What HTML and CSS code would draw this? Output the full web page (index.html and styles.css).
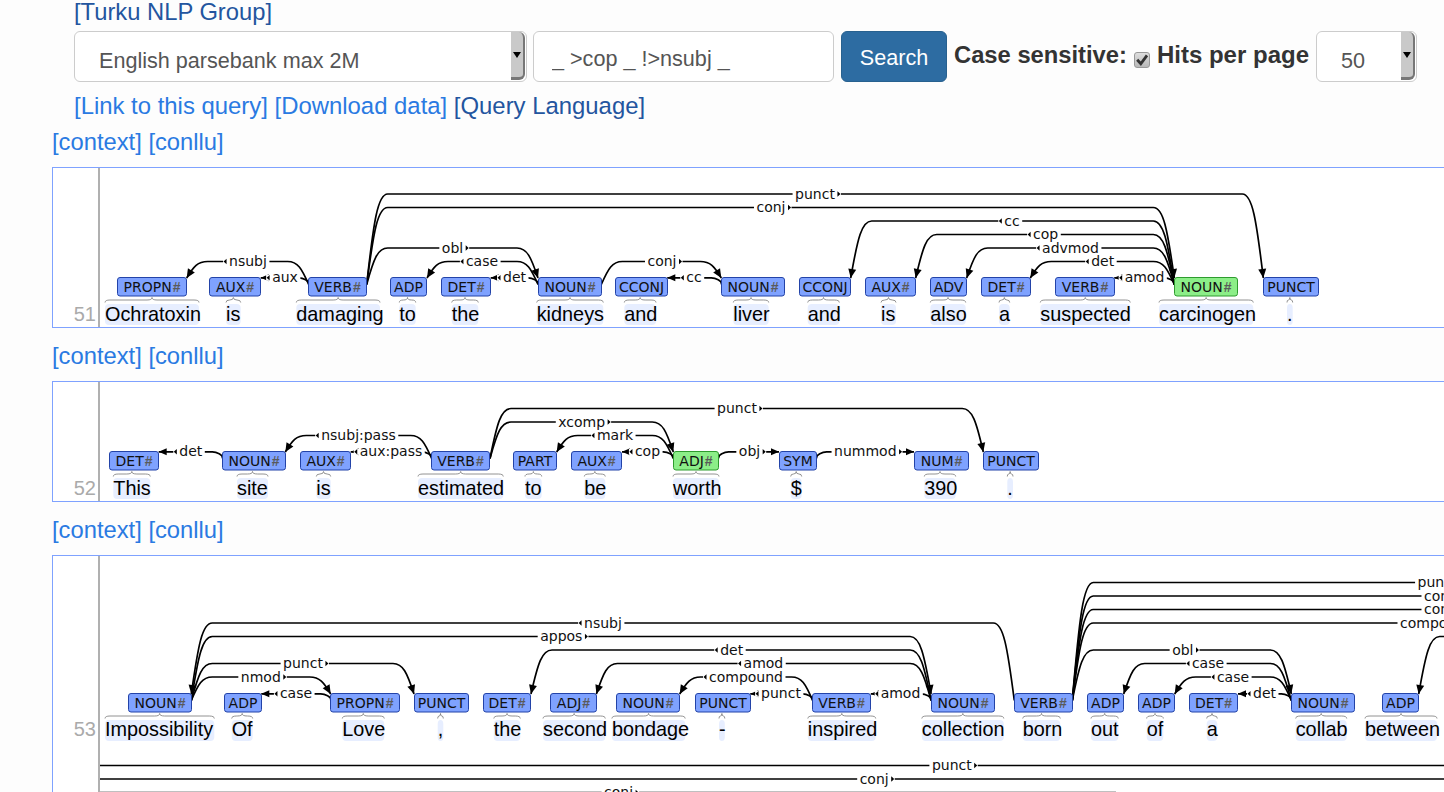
FILE: index.html
```html
<!doctype html>
<html lang="en">
  <head>
    <meta charset="UTF-8" />
    <meta name="viewport" content="width=device-width, initial-scale=1.0" />
    <title>Dependency tree search</title>
    <link rel="stylesheet" href="styles.css">
  </head>
  <body>
    <div class="search">
      <div class="group-link"><a class="dark" href="#">[Turku NLP Group]</a></div>
      <form class="controls">
        <div class="select corpus">
          <span>English parsebank max 2M</span>
          <span class="select-btn"><span class="select-arrow"></span></span>
        </div>
        <input class="query" type="text" value="_ &gt;cop _ !&gt;nsubj _" />
        <button class="search-btn" type="button">Search</button>
        <label class="opt">Case sensitive:</label>
        <span class="checkbox">
          <svg width="14" height="14" viewBox="0 0 14 14"><path d="M2.2 6.8 L5.8 10.8 L12 2.4" fill="none" stroke="#333" stroke-width="2.8" /></svg>
        </span>
        <label class="opt opt-hits">Hits per page</label>
        <div class="select hits">
          <span>50</span>
          <span class="select-btn"><span class="select-arrow"></span></span>
        </div>
      </form>
      <div class="query-links">
        <a href="#">[Link to this query]</a>
        <a href="#">[Download data]</a>
        <a class="dark" href="#">[Query Language]</a>
      </div>
    </div>

    <div class="hit-links"><a href="#">[context]</a> <a href="#">[conllu]</a></div>
    <div class="hit"><svg id="tree51"></svg></div>

    <div class="hit-links"><a href="#">[context]</a> <a href="#">[conllu]</a></div>
    <div class="hit"><svg id="tree52"></svg></div>

    <div class="hit-links"><a href="#">[context]</a> <a href="#">[conllu]</a></div>
    <div class="hit"><svg id="tree53"></svg></div>

    <script src="trees.js"></script>
  </body>
</html>
```

FILE: styles.css
```css
html,
body {
  overflow: hidden;
}

body {
  font-family: "Liberation Sans", Arial, sans-serif;
  background-color: #fdfdfd;
  color: #333;
  margin: 0;
  padding: 0;
  font-size: 23.75px;
  line-height: 34px;
}

a {
  color: #2a7ae2;
  text-decoration: none;
}

a.dark {
  color: #23559f;
}

.search {
  padding-left: 74px;
  margin-bottom: 2px;
}

.group-link {
  height: 24px;
  line-height: 24px;
  margin-bottom: 7px;
}

.controls {
  display: flex;
  align-items: flex-start;
  height: 51px;
  margin: 0;
}

.select {
  box-sizing: border-box;
  display: flex;
  justify-content: space-between;
  height: 51px;
  background-color: #fff;
  border: 1px solid #ccc;
  border-radius: 6px;
  color: #555;
  font-size: 21.6px;
  line-height: 57px;
}

.corpus {
  width: 453px;
  padding-left: 24px;
}

.hits {
  width: 101px;
  margin-left: 7px;
  padding-left: 24px;
}

.select-btn {
  box-sizing: border-box;
  display: flex;
  align-items: center;
  justify-content: center;
  width: 14px;
  height: 48px;
  margin: 0 1px 0 0;
  background-color: #c9c9c9;
  border-right: 2px solid #777;
  border-bottom: 3px solid #777;
  border-radius: 0 6px 6px 0;
}

.select-arrow {
  width: 0;
  height: 0;
  border-left: 4px solid transparent;
  border-right: 4px solid transparent;
  border-top: 6px solid #000;
}

.query {
  box-sizing: border-box;
  width: 301px;
  height: 51px;
  margin-left: 6px;
  padding: 4px 18px 0;
  background-color: #fff;
  border: 1px solid #ccc;
  border-radius: 6px;
  color: #555;
  font-family: "Liberation Sans", Arial, sans-serif;
  font-size: 21.6px;
}

.search-btn {
  box-sizing: border-box;
  width: 106px;
  height: 51px;
  margin-left: 7px;
  padding-top: 3px;
  background-color: #2d6ca2;
  border: 1px solid #28618f;
  border-radius: 6px;
  color: #fff;
  font-family: "Liberation Sans", Arial, sans-serif;
  font-size: 21.6px;
}

.opt {
  margin-left: 7px;
  padding-top: 7px;
  font-weight: bold;
}

.opt-hits {
  font-size: 24px;
}

.checkbox {
  box-sizing: border-box;
  display: flex;
  align-items: center;
  justify-content: center;
  width: 16px;
  height: 16px;
  margin: 21px 0 0 7px;
  background: linear-gradient(#dedede, #b8b8b8);
  border: 1px solid #999;
  border-radius: 3px;
}

.query-links {
  margin-top: 7px;
  height: 34px;
  font-size: 23.9px;
}

.hit-links {
  margin-left: 52px;
  margin-bottom: 8px;
  height: 34px;
}

.hit {
  width: 1600px;
  margin-left: 52px;
  margin-bottom: 11px;
  background-color: #fff;
  border: 1px solid #7fa2ff;
}

.hit svg {
  display: block;
}

.hit text {
  font-family: "DejaVu Sans", sans-serif;
  font-size: 14px;
  fill: #111;
}

.hit .word {
  font-family: "Liberation Sans", Arial, sans-serif;
  font-size: 19.85px;
  fill: #000;
}

.hit .line-no {
  font-family: "Liberation Sans", Arial, sans-serif;
  font-size: 20px;
  fill: #aaa;
  text-anchor: end;
}

.hit .tag-text {
  text-anchor: middle;
}

.hit .hash {
  font-family: "Liberation Sans", Arial, sans-serif;
  font-size: 14px;
  font-weight: bold;
  fill: #5a5a5a;
}

.gutter {
  fill: #b0b0b0;
}

.word-bg {
  fill: #e7eeff;
}

.brace {
  fill: none;
  stroke: #777;
  stroke-width: 0.8;
}

.tag {
  fill: #7fa2ff;
  stroke: #2343a8;
}

.tag-root {
  fill: #8cee88;
  stroke: #2e9c2e;
}

.arc {
  fill: none;
  stroke: #000;
  stroke-width: 1.7;
}

.label-bg {
  fill: #fff;
}
```

FILE: trees.js
```js
const SVG_NS = "http://www.w3.org/2000/svg";

// tokens: [tag, word, tag left, tag right, word left, word right]
// arcs: [from, to, level, label, label centre], level 0 runs along the top of the tags
// x values are page coordinates, a number in from/to is a token index, {x} is off the screen
const trees = [
  {
    id: "tree51", num: 51, height: 159, top: 168, tagTop: 277.5, firstLevel: 261.5, baseline: 320.8, root: 13,
    tokens: [
      ["PROPN#", "Ochratoxin", 117.5, 186.7, 105, 199],
      ["AUX#", "is", 209.3, 260.7, 226, 240.7],
      ["VERB#", "damaging", 308.7, 366.7, 296.3, 380],
      ["ADP", "to", 390.3, 427, 399.3, 415.7],
      ["DET#", "the", 441.3, 490.7, 451.7, 478.3],
      ["NOUN#", "kidneys", 538, 601.3, 536.7, 603.3],
      ["CCONJ", "and", 615.3, 667.3, 624.3, 656],
      ["NOUN#", "liver", 721.3, 784.3, 733.3, 768.7],
      ["CCONJ", "and", 799, 850.7, 807.7, 839.3],
      ["AUX#", "is", 865, 915.7, 881, 896],
      ["ADV", "also", 930.3, 966.7, 930.3, 965.7],
      ["DET#", "a", 981, 1030.3, 999, 1009.7],
      ["VERB#", "suspected", 1055.7, 1114.3, 1040.3, 1130.3],
      ["NOUN#", "carcinogen", 1174.3, 1237.3, 1159, 1253.3],
      ["PUNCT", ".", 1263.3, 1318.3, 1287, 1292.7],
    ],
    arcs: [
      [2, 14, 6, "punct", 815],
      [2, 13, 5, "conj", 771],
      [2, 5, 2, "obl", 452.5],
      [2, 0, 1, "nsubj", 248],
      [2, 1, 0, "aux", 285],
      [5, 3, 1, "case", 482],
      [5, 4, 0, "det", 514.5],
      [5, 7, 1, "conj", 662],
      [7, 6, 0, "cc", 694],
      [13, 8, 4, "cc", 1012],
      [13, 9, 3, "cop", 1045.7],
      [13, 10, 2, "advmod", 1070.5],
      [13, 11, 1, "det", 1102.7],
      [13, 12, 0, "amod", 1144.5],
    ],
  },
  {
    id: "tree52", num: 52, height: 119, top: 382, tagTop: 451.5, firstLevel: 435.5, baseline: 494.8, root: 6,
    tokens: [
      ["DET#", "This", 109.3, 158.7, 113.3, 150.3],
      ["NOUN#", "site", 222.3, 285.3, 237, 268],
      ["AUX#", "is", 300, 350.7, 316.3, 330.7],
      ["VERB#", "estimated", 431.7, 490, 418, 503.3],
      ["PART", "to", 513.7, 556.7, 525, 541.7],
      ["AUX#", "be", 571.3, 622, 584.3, 605.3],
      ["ADJ#", "worth", 673.3, 718.7, 673, 719],
      ["SYM", "$", 779, 816.7, 790.7, 801.7],
      ["NUM#", "390", 914, 969, 924.3, 955.7],
      ["PUNCT", ".", 983.3, 1038.3, 1007.3, 1013],
    ],
    arcs: [
      [1, 0, 0, "det", 190.8],
      [3, 1, 1, "nsubj:pass", 358.5],
      [3, 2, 0, "aux:pass", 391],
      [3, 9, 3, "punct", 737],
      [3, 6, 2, "xcomp", 581.7],
      [6, 4, 1, "mark", 615],
      [6, 5, 0, "cop", 647.5],
      [6, 7, 0, "obj", 749.5],
      [7, 8, 0, "nummod", 865.3],
    ],
  },
  {
    id: "tree53", num: 53, height: 260, top: 556, tagTop: 693.5, firstLevel: 677, baseline: 736, root: -1,
    tokens: [
      ["NOUN#", "Impossibility", 128, 191.3, 105, 214.3],
      ["ADP", "Of", 224.7, 261.3, 231.7, 252.7],
      ["PROPN#", "Love", 330.7, 399.7, 342.3, 384.3],
      ["PUNCT", ",", 414, 468.7, 437.7, 443.3],
      ["DET#", "the", 483.4, 531, 493.8, 520.3],
      ["ADJ#", "second", 550.2, 596.4, 543, 605.3],
      ["NOUN#", "bondage", 616.4, 679.7, 611.9, 685.2],
      ["PUNCT", "-", 695.2, 750.3, 719, 724.8],
      ["VERB#", "inspired", 812.6, 870.8, 807.8, 875.7],
      ["NOUN#", "collection", 931.1, 994.1, 921.8, 1003.8],
      ["VERB#", "born", 1014.3, 1072.3, 1022.7, 1060.3],
      ["ADP", "out", 1087, 1123.7, 1091, 1118.3],
      ["ADP", "of", 1138, 1174.7, 1146.7, 1163.3],
      ["DET#", "a", 1189, 1238, 1206.7, 1217.3],
      ["NOUN#", "collab", 1291.3, 1354.7, 1295.7, 1346.7],
      ["ADP", "between", 1382, 1418.7, 1365, 1437],
    ],
    arcs: [
      [10, 0, 5, "nsubj", 603],
      [0, 9, 4, "appos", 561.3],
      [0, 3, 2, "punct", 303],
      [0, 2, 1, "nmod", 260.8],
      [2, 1, 0, "case", 296],
      [9, 4, 3, "det", 731.7],
      [9, 5, 2, "amod", 763.4],
      [8, 6, 1, "compound", 746],
      [8, 7, 0, "punct", 781],
      [9, 8, 0, "amod", 900.5],
      [10, 14, 3, "obl", 1182.8],
      [14, 11, 2, "case", 1208],
      [14, 12, 1, "case", 1233],
      [14, 13, 0, "det", 1264.5],
      [10, { x: 1600 }, 8, "punct", 1437.5],
      [10, { x: 1600 }, 7, "conj", 1438.5],
      [10, { x: 1600 }, 6, "conj", 1438.5],
      [10, { x: 1600 }, 5, "compound", 1437],
      [{ x: 1600 }, 15, 4, "", 0],
    ],
    // arcs carried over from the row above: [y, right end, label, label centre]
    wrapped: [
      [765.5, 1600, "punct", 951.8],
      [779, 1600, "conj", 874.2],
      [792.5, 1116, "conj", 618.6],
    ],
  },
];

function add(parent, name, attrs, text) {
  const el = document.createElementNS(SVG_NS, name);
  for (const key in attrs) {
    el.setAttribute(key, attrs[key]);
  }
  if (text) {
    el.textContent = text;
  }
  parent.appendChild(el);
  return el;
}

function bracePath(x0, x1, tagTop) {
  const mid = (x0 + x1) / 2;
  const bottom = tagTop + 25;
  const bar = tagTop + 22.5;
  const tip = tagTop + 20;
  const r = Math.min(5, (x1 - x0) / 4);
  return `M ${x0} ${bottom} Q ${x0} ${bar} ${x0 + r} ${bar} L ${mid - r} ${bar} Q ${mid} ${bar} ${mid} ${tip}` +
    ` Q ${mid} ${bar} ${mid + r} ${bar} L ${x1 - r} ${bar} Q ${x1} ${bar} ${x1} ${bottom}`;
}

function drawLabel(g, y, text, centre, dir) {
  const label = add(g, "text", { x: centre, y: y + 4.5, "text-anchor": "middle" }, text);
  const width = label.getComputedTextLength();
  const left = centre - width / 2;
  const right = centre + width / 2;
  const bgLeft = dir < 0 ? left - 6 : left - 2.5;
  const bgRight = dir > 0 ? right + 6 : right + 2.5;
  const bg = add(g, "rect", { class: "label-bg", x: bgLeft, y: y - 3, width: bgRight - bgLeft, height: 6 });
  g.insertBefore(bg, label);
  // little triangle beside the label shows the direction of the arc
  const tipX = dir < 0 ? left - 5.5 : right + 5.5;
  const baseX = dir < 0 ? left - 2.5 : right + 2.5;
  add(g, "path", { d: `M ${tipX} ${y} L ${baseX} ${y - 2.8} L ${baseX} ${y + 2.8} Z` });
}

function drawArrow(g, x, y, fromX, fromY, len, half) {
  const dx = x - fromX;
  const dy = y - fromY;
  const d = Math.hypot(dx, dy);
  const ux = dx / d;
  const uy = dy / d;
  const bx = x - ux * len;
  const by = y - uy * len;
  add(g, "path", { d: `M ${x} ${y} L ${bx - uy * half} ${by + ux * half} L ${bx + uy * half} ${by - ux * half} Z` });
}

function drawArc(g, tree, arc) {
  const [from, to, level, text, centre] = arc;
  const T = tree.tagTop - tree.top;
  const fromTok = typeof from === "number" ? tree.tokens[from] : null;
  const toTok = typeof to === "number" ? tree.tokens[to] : null;
  const fromX = fromTok ? fromTok[2] : from.x;
  const toX = toTok ? toTok[2] : to.x;
  const dir = toX > fromX ? 1 : -1;
  const sx = fromTok ? (dir > 0 ? fromTok[3] : fromTok[2]) : from.x;
  const tx = toTok ? (dir > 0 ? toTok[2] : toTok[3]) : to.x;
  const sy = T + 7;

  if (level === 0) {
    const y = T + 0.3;
    const bx = sx + dir * 10;
    add(g, "path", { class: "arc", d: `M ${sx} ${sy} C ${sx - dir} ${sy - 4} ${bx - dir * 4} ${y} ${bx} ${y} L ${tx} ${y}` });
    drawArrow(g, tx, y, tx - dir, y, 8, 3.5);
    drawLabel(g, y, text, centre, dir);
    return;
  }

  const y = tree.firstLevel - tree.top - (level - 1) * 13.5;
  const ty = T + 0.5;
  const ax = sx + dir * 21;
  const bx = tx - dir * 21;
  const c2x = tx - dir * 7;
  const c2y = y + (ty - y) * 0.3;
  let d = `M ${sx} ${sy} C ${sx + dir * 7} ${y + (sy - y) * 0.3} ${ax - dir * 10} ${y} ${ax} ${y} L ${bx} ${y}`;
  d += ` C ${bx + dir * 10} ${y} ${c2x} ${c2y} ${tx} ${ty}`;
  add(g, "path", { class: "arc", d: d });
  if (toTok) {
    drawArrow(g, tx, ty, c2x, c2y, 9, 4);
  }
  if (text) {
    drawLabel(g, y, text, centre, dir);
  }
}

function drawTree(tree) {
  const svg = document.getElementById(tree.id);
  svg.setAttribute("width", 1598);
  svg.setAttribute("height", tree.height);
  svg.setAttribute("viewBox", `53 0 1598 ${tree.height}`);
  const T = tree.tagTop - tree.top;
  const baseline = tree.baseline - tree.top;

  add(svg, "rect", { class: "gutter", x: 98, y: 0, width: 2, height: tree.height });
  add(svg, "text", { class: "line-no", x: 96, y: baseline }, String(tree.num));

  tree.tokens.forEach(([, word, , , x0, x1]) => {
    add(svg, "rect", { class: "word-bg", x: x0, y: T + 26.5, width: x1 - x0, height: 21, rx: 4 });
    add(svg, "path", { class: "brace", d: bracePath(x0, x1, T) });
    add(svg, "text", { class: "word", x: x0, y: baseline }, word);
  });

  const arcs = add(svg, "g", {});
  tree.arcs.forEach((arc) => drawArc(arcs, tree, arc));
  (tree.wrapped || []).forEach(([y, right, text, centre]) => {
    const ly = y - tree.top;
    add(arcs, "path", { class: "arc", d: `M 100 ${ly} L ${right} ${ly}` });
    drawLabel(arcs, ly, text, centre, 1);
  });

  tree.tokens.forEach(([tag, , x0, x1], i) => {
    const left = Math.floor(x0) + 0.5;
    const right = Math.ceil(x1) - 0.5;
    add(svg, "rect", {
      class: i === tree.root ? "tag tag-root" : "tag",
      x: left, y: T, width: right - left, height: 18.5, rx: 2.5,
    });
    const hasHash = tag.endsWith("#");
    const label = add(svg, "text", { class: "tag-text", x: (left + right) / 2, y: T + 14.7 }, hasHash ? tag.slice(0, -1) : tag);
    if (hasHash) {
      add(label, "tspan", { class: "hash", dx: 1 }, "#");
    }
  });
}

trees.forEach(drawTree);
```
